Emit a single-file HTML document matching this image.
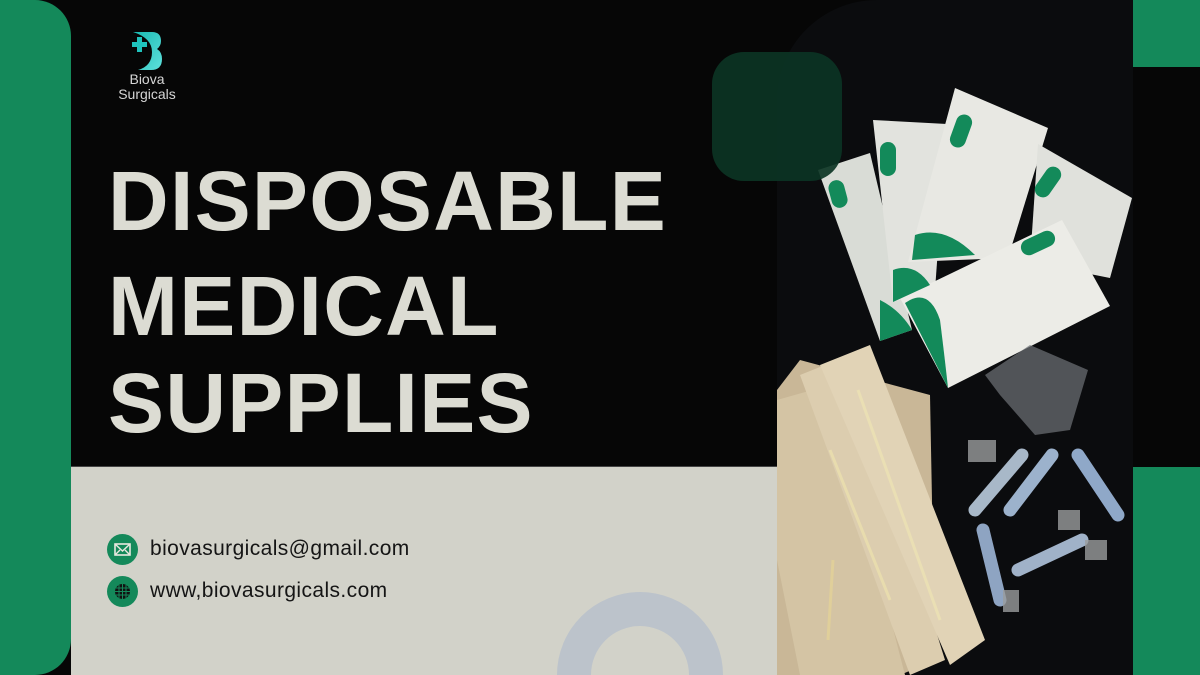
<!DOCTYPE html>
<html><head><meta charset="utf-8"><style>
*{margin:0;padding:0;box-sizing:border-box}
html,body{width:1200px;height:675px;overflow:hidden}
body{background:#060606;position:relative;font-family:"Liberation Sans",sans-serif}
svg{display:block}
.abs{position:absolute}
.title{left:108px;color:#dcdcd3;font-weight:bold;font-size:84px;letter-spacing:1.3px;line-height:1;white-space:nowrap}
.contact{left:150px;font-size:21px;color:#151515;letter-spacing:0.4px;line-height:24px}
.ic{left:107px;width:31px;height:31px;border-radius:50%;background:#14895a}
</style></head><body>
<div class="abs" style="left:0;top:0;width:71px;height:675px;background:#14895a;border-radius:0 36px 36px 0"></div>
<div class="abs" style="left:71px;top:466px;width:707px;height:209px;background:#d2d2c9;border-top:1px solid #444"></div>
<svg class="abs" style="left:557px;top:592px" width="166" height="83" viewBox="0 0 166 83">
<path d="M0 83 A83 83 0 0 1 166 83 H132 A49 49 0 0 0 34 83Z" fill="#bcc3cb"/>
</svg>
<div class="abs" style="left:1133px;top:0;width:67px;height:67px;background:#14895a"></div>
<div class="abs" style="left:1133px;top:467px;width:67px;height:208px;background:#14895a"></div>

<svg class="abs" style="left:777px;top:0" width="356" height="675" viewBox="777 0 356 675">
<path d="M877 0 H1133 V675 H777 V100 A100 100 0 0 1 877 0Z" fill="#0b0c0e"/>
<polygon points="818,170 870,153 912,330 880,341" fill="#d9dcd6"/>
<polygon points="873,120 947,124 935,290 893,302" fill="#e2e3de"/>
<polygon points="955,88 1048,128 1008,258 908,262" fill="#e8e8e3"/>
<polygon points="1038,144 1132,198 1110,278 1030,262" fill="#e0e1dc"/>
<polygon points="900,298 1062,220 1110,306 948,388" fill="#ecece7"/>
<path d="M880 300 Q900 310 912 330 L880 341Z" fill="#138a5a"/>
<path d="M893 270 Q915 262 930 285 L893 302Z" fill="#138a5a"/>
<path d="M915 235 Q945 225 975 255 L912 260Z" fill="#138a5a"/>
<path d="M910 300 Q930 290 940 320 Q945 360 948 388 L905 303Z" fill="#138a5a"/>
<rect x="830" y="180" width="16" height="28" rx="8" fill="#138a5a" transform="rotate(-15 838 194)"/>
<rect x="880" y="142" width="16" height="34" rx="8" fill="#138a5a"/>
<rect x="953" y="114" width="16" height="34" rx="8" fill="#138a5a" transform="rotate(20 961 131)"/>
<rect x="1040" y="165" width="16" height="34" rx="8" fill="#138a5a" transform="rotate(35 1048 182)"/>
<rect x="1020" y="235" width="36" height="16" rx="8" fill="#138a5a" transform="rotate(-25 1038 243)"/>
<polygon points="985,375 1030,345 1088,370 1070,430 1035,435 1000,395" fill="#6f7378" opacity="0.7"/>
<polygon points="777,390 800,360 930,395 935,660 900,675 777,675" fill="#c9b797"/>
<polygon points="777,400 830,385 905,675 800,675 777,560" fill="#d4c4a4"/>
<polygon points="800,375 850,355 945,660 910,675" fill="#dccdaf"/>
<polygon points="820,365 870,345 985,640 950,665" fill="#e1d3b6"/>
<line x1="830" y1="450" x2="890" y2="600" stroke="#e8dcae" stroke-width="3"/>
<line x1="858" y1="390" x2="940" y2="620" stroke="#eadfb4" stroke-width="3"/>
<line x1="833" y1="560" x2="828" y2="640" stroke="#e0cf9a" stroke-width="3"/>
<g stroke-linecap="round" fill="none">
<line x1="1022" y1="455" x2="975" y2="510" stroke="#a8b8c8" stroke-width="13"/>
<line x1="1052" y1="455" x2="1010" y2="510" stroke="#9cb2cc" stroke-width="13"/>
<line x1="1078" y1="455" x2="1118" y2="515" stroke="#8fa8c8" stroke-width="13"/>
<line x1="983" y1="530" x2="1000" y2="600" stroke="#8ea4c2" stroke-width="13"/>
<line x1="1082" y1="540" x2="1018" y2="570" stroke="#a0b2c8" stroke-width="13"/>
</g>
<rect x="968" y="440" width="28" height="22" fill="#9a9c9e" opacity="0.8"/>
<rect x="1058" y="510" width="22" height="20" fill="#9a9c9e" opacity="0.8"/>
<rect x="1085" y="540" width="22" height="20" fill="#9a9c9e" opacity="0.8"/>
<rect x="1003" y="590" width="16" height="22" fill="#9a9c9e" opacity="0.8"/>
</svg>
<div class="abs" style="left:712px;top:52px;width:130px;height:129px;border-radius:32px;background:#0c3424;opacity:0.92"></div>

<svg class="abs" style="left:126px;top:30px" width="40" height="42" viewBox="0 0 40 42">
<defs><linearGradient id="g" x1="0" y1="0" x2="1" y2="1"><stop offset="0" stop-color="#18b8b0"/><stop offset="1" stop-color="#5ee0dc"/></linearGradient></defs>
<path d="M7 2 H26 Q35 2 35 11 Q35 16 31 19 Q36 22 36 29 Q36 40 25 40 H12 Q26 36 26 22 Q26 8 7 2Z" fill="url(#g)"/>
<path d="M6 12 H11 V7 H16 V12 H21 V17 H16 V22 H11 V17 H6Z" fill="#1fc3bd"/>
</svg>
<div class="abs" style="left:112px;top:72px;width:70px;text-align:center;color:#d6d6d6;font-size:14px;line-height:15px">Biova<br>Surgicals</div>

<div class="abs title" style="top:159px">DISPOSABLE</div>
<div class="abs title" style="top:264px">MEDICAL</div>
<div class="abs title" style="top:361px">SUPPLIES</div>

<div class="abs ic" style="top:534px"><svg width="31" height="31" viewBox="0 0 31 31"><rect x="8" y="10" width="15" height="11" fill="none" stroke="#e8e8e0" stroke-width="1.6"/><path d="M8 10 L15.5 17 L23 10 M8 21 L13 16 M23 21 L18 16" fill="none" stroke="#e8e8e0" stroke-width="1.4"/></svg></div>
<div class="abs contact" style="top:537px">biovasurgicals@gmail.com</div>
<div class="abs ic" style="top:576px"><svg width="31" height="31" viewBox="0 0 31 31"><circle cx="15.5" cy="15.5" r="7.5" fill="#111"/><path d="M15.5 8 V23 M12 8.8 V22.2 M19 8.8 V22.2 M8 15.5 H23 M9 12 H22 M9 19 H22" stroke="#14895a" stroke-width="1"/></svg></div>
<div class="abs contact" style="top:579px">www,biovasurgicals.com</div>
</body></html>
